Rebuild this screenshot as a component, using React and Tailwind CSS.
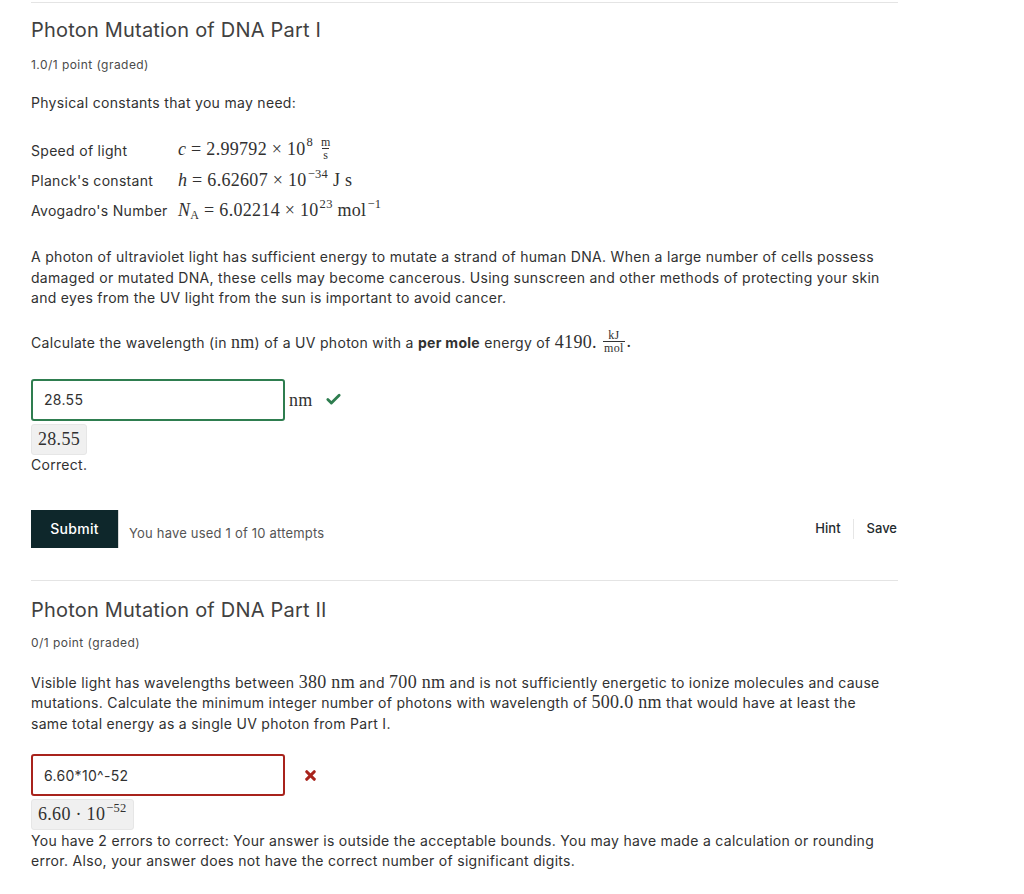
import { Check, X } from "lucide-react"

const SANS = { fontFamily: "Inter, 'Noto Sans', sans-serif" }

function M({ children, className = "" }) {
  return (
    <span className={`font-['Liberation_Serif',serif] text-[18px] leading-none ${className}`}>
      {children}
    </span>
  )
}

function Frac({ top, bottom }) {
  return (
    <span className="inline-flex flex-col items-center align-middle mx-[2px] text-[12px] leading-[12px] relative -top-[2px]">
      <span className="px-[1px]">{top}</span>
      <span className="border-t border-[#333] px-[1px]">{bottom}</span>
    </span>
  )
}

function Sup({ children }) {
  return <span className="inline-block text-[12.5px] relative -top-[8px] ml-[1px]">{children}</span>
}

function ConstantRow({ label, children }) {
  return (
    <div className="flex items-center h-[30px]">
      <span className="w-[147px] shrink-0">{label}</span>
      <M>{children}</M>
    </div>
  )
}

function Preview({ children }) {
  return (
    <div className="inline-block bg-[#f0f0f0] border border-[#e6e6e6] rounded-[3px] px-[6px] pt-[4px] pb-[4px]">
      <M>{children}</M>
    </div>
  )
}

export default function App() {
  return (
    <div className="bg-white min-h-[894px] text-[#313131] text-[14px] tracking-[0.3px]" style={SANS}>
      <div className="w-[867px] ml-[31px] pt-[2px]">
        {/* ---------- PART I ---------- */}
        <div className="border-t border-[#e4e4e4]" />
        <h2 className="text-[20px] leading-[28px] mt-[13px] text-[#414141] tracking-[0.2px]">Photon Mutation of DNA Part I</h2>
        <div className="text-[12px] text-[#4a4a4a] mt-[12px] tracking-[0.45px]">1.0/1 point (graded)</div>

        <p className="mt-[18px] leading-[21px]">Physical constants that you may need:</p>

        <div className="mt-[22px]">
          <ConstantRow label="Speed of light">
            <i>c</i> = 2.99792 × 10<Sup>8</Sup> <Frac top="m" bottom="s" />
          </ConstantRow>
          <ConstantRow label="Planck's constant">
            <i>h</i> = 6.62607 × 10<Sup>−34</Sup> J s
          </ConstantRow>
          <ConstantRow label="Avogadro's Number">
            <i>N</i><sub className="text-[12px]">A</sub> = 6.02214 × 10<Sup>23</Sup> mol<Sup>−1</Sup>
          </ConstantRow>
        </div>

        <p className="mt-[22px] leading-[20.5px]">
          A photon of ultraviolet light has sufficient energy to mutate a strand of human DNA. When a large number of cells possess<br />
          damaged or mutated DNA, these cells may become cancerous. Using sunscreen and other methods of protecting your skin<br />
          and eyes from the UV light from the sun is important to avoid cancer.
        </p>

        <p className="mt-[22px] leading-[21px]">
          Calculate the wavelength (in <M>nm</M>) of a UV photon with a <b>per mole</b> energy of <M>4190.</M>{" "}
          <M><Frac top="kJ" bottom="mol" />.</M>
        </p>

        <div className="mt-[23px] flex items-center">
          <div className="w-[254px] h-[42px] border-2 border-[#2e7d4f] rounded-[3px] flex items-center px-[11px]">28.55</div>
          <M className="ml-[4px]">nm</M>
          <Check className="ml-[12px] text-[#2e7d4f]" size={17} strokeWidth={4} />
        </div>
        <div className="mt-[3px]">
          <Preview>28.55</Preview>
        </div>
        <div className="leading-[20px]">Correct.</div>

        <div className="mt-[35px] flex items-center">
          <button className="bg-[#0e272b] text-white font-medium h-[38px] w-[88px] border-r border-[#d8d8d8]">Submit</button>
          <span className="ml-[10px] mt-[10px] text-[13px] text-[#555] tracking-[0.2px]">You have used 1 of 10 attempts</span>
          <div className="ml-auto flex items-center text-[13px] text-[#1f2b2e] font-medium tracking-normal">
            <span className="pr-[12px]">Hint</span>
            <span className="border-l border-[#e6e6e6] h-[20px]" />
            <span className="pl-[13px] pr-[1px]">Save</span>
          </div>
        </div>

        {/* ---------- PART II ---------- */}
        <div className="border-t border-[#e4e4e4] mt-[32px]" />
        <h2 className="text-[20px] leading-[28px] mt-[15px] text-[#414141] tracking-[0.2px]">Photon Mutation of DNA Part II</h2>
        <div className="text-[12px] text-[#4a4a4a] mt-[10px] tracking-[0.45px]">0/1 point (graded)</div>

        <p className="mt-[21px] leading-[20.5px]">
          Visible light has wavelengths between <M>380 nm</M> and <M>700 nm</M> and is not sufficiently energetic to ionize molecules and cause<br />
          mutations. Calculate the minimum integer number of photons with wavelength of <M>500.0 nm</M> that would have at least the<br />
          same total energy as a single UV photon from Part I.
        </p>

        <div className="mt-[20px] flex items-center">
          <div className="w-[254px] h-[42px] border-2 border-[#a8231c] rounded-[3px] flex items-center px-[11px]">6.60*10^-52</div>
          <X className="ml-[18px] text-[#a8231c]" size={15} strokeWidth={5} />
        </div>
        <div className="mt-[3px]">
          <Preview>
            6.60 · 10<Sup>−52</Sup>
          </Preview>
        </div>
        <p className="leading-[20px] mt-[1px]">
          You have 2 errors to correct: Your answer is outside the acceptable bounds. You may have made a calculation or rounding<br />
          error. Also, your answer does not have the correct number of significant digits.
        </p>
      </div>
    </div>
  )
}
